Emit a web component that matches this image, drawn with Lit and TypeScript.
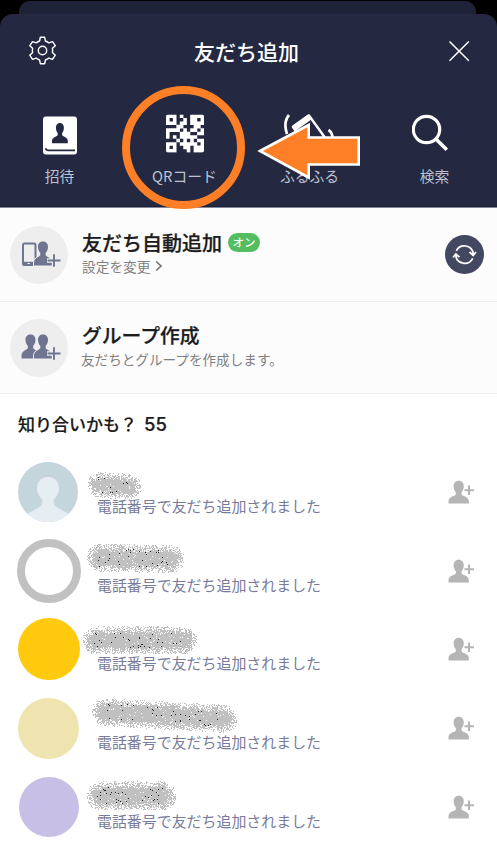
import { LitElement, html, css, svg } from "lit";
import { customElement, property } from "lit/decorators.js";

const QR = [
  "11101001111",
  "10100101101",
  "11101101111",
  "00011000110",
  "11110101101",
  "10001110011",
  "10101111100",
  "00010101011",
  "11101111101",
  "10100110111",
  "11100010111",
];

const qrPath = QR.map((row, y) =>
  [...row].map((c, x) => (c === "1" ? `M${x} ${y}h1.04v1.04h-1.04z` : "")).join("")
).join("");

const person = "M12 0C8.2 0 5.800 2.600 6 6.200C6.200 9 7.400 10.900 8.600 12V14.500C7 16.700 0 16.500 0 21.700V24H24V21.700C24 16.500 17 16.700 15.400 14.500V12C16.600 10.900 17.800 9 18 6.200C18.200 2.600 15.800 0 12 0Z";

interface Spray {
  x: number;
  w: number;
  top: number;
  h: number;
  slope: number;
  seed: number;
}

interface Friend {
  avatar: string;
  spray: Spray;
}

const FRIENDS: Friend[] = [
  { avatar: "default", spray: { x: 87, w: 54, top: 11, h: 26, slope: 3, seed: 11 } },
  { avatar: "ring", spray: { x: 86, w: 98, top: 4, h: 28, slope: 2, seed: 23 } },
  { avatar: "yellow", spray: { x: 82, w: 115, top: 9, h: 28, slope: 0, seed: 37 } },
  { avatar: "beige", spray: { x: 91, w: 146, top: 1, h: 28, slope: 8, seed: 41 } },
  { avatar: "violet", spray: { x: 86, w: 90, top: 6, h: 29, slope: 0, seed: 59 } },
];

function sprayPaths(s: Spray) {
  let n = s.seed * 7919;
  const rnd = () => {
    n = (n + 0x6d2b79f5) | 0;
    let t = Math.imul(n ^ (n >>> 15), 1 | n);
    t = (t + Math.imul(t ^ (t >>> 7), 61 | t)) ^ t;
    return ((t ^ (t >>> 14)) >>> 0) / 4294967296;
  };
  const r = s.h / 2;
  let grey = "";
  let black = "";
  for (let y = 0; y < s.h + s.slope; y++) {
    for (let x = 0; x < s.w; x++) {
      const cx = Math.min(Math.max(x, r), s.w - r);
      const cy = r + (s.slope * x) / s.w;
      const d = Math.hypot(x - cx, y - cy) / r;
      if (d > 1) continue;
      const p = d < 0.45 ? 0.96 : Math.max(0, 1.5 - d * 1.3);
      const cell = `M${x} ${y}h1v1h-1z`;
      if (rnd() < p) grey += cell;
      const inText = x > 10 && x < s.w - 12 && Math.abs(y - cy) < 9;
      if (inText && rnd() < 0.024) black += cell;
    }
  }
  return { grey, black };
}

@customElement("spray-mark")
class SprayMark extends LitElement {
  @property({ attribute: false }) spray!: Spray;
  static styles = css`
    :host { display: block; }
    svg { display: block; shape-rendering: crispEdges; }
  `;
  render() {
    const { grey, black } = sprayPaths(this.spray);
    return html`<svg width=${this.spray.w} height=${this.spray.h + this.spray.slope}>
      <path d=${grey} fill="#c0c0c0"></path>
      <path d=${black} fill="#222"></path>
    </svg>`;
  }
}

@customElement("friend-row")
class FriendRow extends LitElement {
  @property({ attribute: false }) friend!: Friend;
  static styles = css`
    :host { display: block; position: relative; height: 78.7px; }
    .row { display: grid; grid-template-columns: 64px 1fr 27px; column-gap: 16px; padding: 0 22px 0 17px; height: 64px; }
    .avatar { width: 61px; height: 61px; border-radius: 50%; align-self: center; justify-self: center; box-sizing: border-box; overflow: hidden; }
    .avatar svg { display: block; }
    .default { width: 60px; height: 60px; background: #c5d5dc; margin-left: -2px; }
    .ring { width: 64px; height: 64px; border: 8px solid #c1c1c1; background: #fff; }
    .yellow { width: 62px; height: 62px; background: #ffc90e; }
    .beige { background: #efe4b0; margin-left: -2px; }
    .violet { width: 60px; height: 60px; background: #c8bfe7; }
    .note { align-self: end; font-size: 14.95px; line-height: 22px; color: #777c9a; white-space: nowrap; margin-bottom: 7px; }
    .add { align-self: center; }
    .spray { position: absolute; }
  `;
  render() {
    const { avatar, spray } = this.friend;
    return html`<div class="row">
        <div class="avatar ${avatar}">
          ${avatar === "default"
            ? html`<svg width="60" height="60" viewBox="0 0 60 60"><path fill="#e6edf2" d="M30 15C22 15 18.500 21 19 28C19.500 32 21.500 35 24 37.500C25 42 23.500 44 20 46L8 52.500V60H52V52.500L40 46C36.500 44 35 42 36 37.500C38.500 35 40.500 32 41 28C41.500 21 38 15 30 15Z"/></svg>`
            : ""}
        </div>
        <div class="note">電話番号で友だち追加されました</div>
        <svg class="add" width="27" height="24" viewBox="0 0 27 24" fill="#b5b5b5">
          <g transform="translate(.5 .8) scale(.85 .95)"><path d=${person}/></g>
          <path d="M16.200 10.300H26M21 5.500V15" stroke="#fff" stroke-width="3.600"/>
          <path d="M16.500 10.300H26M21 5.500V15" stroke="#b5b5b5" stroke-width="2.100"/>
        </svg>
      </div>
      <spray-mark class="spray" style="left:${spray.x}px;top:${spray.top}px" .spray=${spray}></spray-mark>`;
  }
}

@customElement("app-root")
class AppRoot extends LitElement {
  static styles = css`
    :host { display: block; position: relative; width: 497px; height: 850px; overflow: hidden; background: #fff; font-family: "Noto Sans CJK JP", sans-serif; }
    svg { display: block; }
    .top { background: #000; height: 207px; padding-top: 1px; box-sizing: border-box; border-bottom: 1px solid #1d2138; }
    .back { height: 13px; margin: 0 21px 0 19px; background: #1f2338; border-radius: 11px 11px 0 0; }
    .sheet { height: 192px; background: #242941; border-radius: 13px 13px 0 0; }
    .bar { display: grid; grid-template-columns: 28px 1fr 28px; align-items: center; padding: 0 27px 0 29px; height: 74px; }
    .bar .close { justify-self: end; }
    .gear { margin-top: -1px; }
    .title { color: #fff; font-size: 21px; line-height: 30px; font-weight: 500; text-align: center; margin: -1px 6px 0 0; }
    .tabs { display: grid; grid-template-columns: repeat(4, 125px); margin-left: -3px; padding-top: 24px; }
    .tab { display: flex; flex-direction: column; align-items: center; gap: 11px; color: #bdc1d3; font-size: 14.8px; line-height: 22px; }
    .tab svg { height: 43px; }
    .tab span { margin-top: -1px; }
    .option { display: grid; grid-template-columns: 58px 1fr 39px; column-gap: 14px; align-items: center; padding: 0 13px 0 10px; height: 92px; background: #fcfcfc; border-bottom: 1px solid #ededed; box-sizing: border-box; }
    .option .words { padding-bottom: 4px; }
    .first { border-top: 1px solid #85889a; height: 95px; }
    .first .words { padding-bottom: 3px; }
    .disc { width: 58px; height: 58px; border-radius: 50%; background: #eee; }
    .heading { display: flex; align-items: center; gap: 6px; font-size: 20px; line-height: 25px; font-weight: 500; color: #1c1c1c; -webkit-text-stroke: .25px #1c1c1c; }
    .pill { font-size: 11.5px; line-height: 19px; height: 19px; width: 32px; text-align: center; border-radius: 10px; background: #53bd60; color: #fff; -webkit-text-stroke: 0; }
    .detail { display: flex; align-items: center; gap: 5px; font-size: 13.7px; line-height: 22px; color: #808080; white-space: nowrap; }
    .second .words { padding-bottom: 5px; }
    .second .heading { line-height: 27px; font-size: 19.8px; }
    .second .detail { font-size: 13.6px; margin-left: -1px; }
    .sync { width: 39px; height: 39px; border-radius: 50%; background: #434861; }
    .maybe { display: flex; gap: 7px; align-items: center; height: 59px; padding-left: 18px; font-size: 17px; font-weight: 500; color: #1b1b1b; -webkit-text-stroke: .2px #1b1b1b; }
    .count { font-family: Inter, sans-serif; font-size: 18.5px; font-weight: 500; }
    .list { padding-top: 7px; }
    .marks { position: absolute; left: 0; top: 0; }
  `;
  render() {
    return html`
      <header class="top">
        <div class="back"></div>
        <div class="sheet">
          <div class="bar">
            <svg class="gear" width="28" height="30" viewBox="0 0 28 30" fill="none" stroke="#fff" stroke-width="1.400" stroke-linejoin="round">
              <path d="M11.300 1.300H15.700L16.400 5C17.700 5.400 18.800 6 19.800 6.900L23.500 5.600L26.300 9.700L23.400 12.300C23.700 13.700 23.700 15.100 23.400 16.500L26.300 19.200L23.500 23.400L19.800 22.100C18.800 23 17.700 23.600 16.400 24L15.700 27.700H11.300L10.600 24C9.300 23.600 8.200 23 7.200 22.100L3.500 23.400L.8 19.200L3.600 16.500C3.300 15.100 3.300 13.700 3.600 12.300L.8 9.700L3.500 5.600L7.200 6.900C8.200 6 9.300 5.400 10.600 5Z"/>
              <circle cx="13.500" cy="14.500" r="4.200"/>
            </svg>
            <div class="title">友だち追加</div>
            <svg class="close" width="22" height="22" viewBox="0 0 22 22" stroke="#fff" stroke-width="1.500"><path d="M1.500 1.500L20.800 20.800M20.800 1.500L1.500 20.800"/></svg>
          </div>
          <div class="tabs">
            <div class="tab">
              <svg width="36" height="43" viewBox="0 0 36 43">
                <rect x="1" y="4.500" width="34" height="38" rx="3" fill="#fff"/>
                <g transform="translate(10 11) scale(.66 .84)" fill="#242941"><path d=${person}/></g>
                <path d="M3.500 36.300Q4 38.300 6 38.300H33" fill="none" stroke="#242941" stroke-width="1.700"/>
              </svg>
              <span>招待</span>
            </div>
            <div class="tab">
              <svg width="38" height="43" viewBox="0 0 38 43">
                <clipPath id="round"><rect y="2.500" width="38" height="38" rx="2"/></clipPath>
                <g clip-path="url(#round)"><path transform="translate(0 2.500) scale(3.4545)" fill="#fff" d=${qrPath}/></g>
              </svg>
              <span>QRコード</span>
            </div>
            <div class="tab">
              <svg width="56" height="43" viewBox="0 0 56 43" fill="none" stroke="#fff" stroke-width="2.700">
                <path d="M7 3Q1 10 5 22"/>
                <path d="M11 15L27 3.500L49 34L33 46Z" stroke-width="2.400" stroke-linejoin="round"/>
                <path d="M11.500 16.500L28 4.800" stroke-width="6"/>
                <path d="M46.500 18Q50.500 20.500 50.500 26"/>
              </svg>
              <span>ふるふる</span>
            </div>
            <div class="tab">
              <svg width="46" height="43" viewBox="0 0 46 43" fill="none" stroke="#fff" stroke-width="3.200">
                <circle cx="14.500" cy="17.500" r="13.200"/><path d="M23.900 26.900L34.800 37.800" stroke-width="3.600"/>
              </svg>
              <span>検索</span>
            </div>
          </div>
        </div>
      </header>

      <section class="option first">
        <div class="disc">
          <svg width="58" height="58" viewBox="0 0 58 58">
            <rect x="13" y="17.500" width="12.500" height="21.500" rx="1.500" fill="none" stroke="#6f7590" stroke-width="2"/>
            <path d="M13 35.800H25V39.500H13Z" fill="#6f7590"/><path d="M17.500 37.500H20" stroke="#eee"/>
            ${this.bust(0)}${this.plus()}
          </svg>
        </div>
        <div class="words">
          <div class="heading">友だち自動追加<span class="pill">オン</span></div>
          <div class="detail">設定を変更<svg width="8" height="12" viewBox="0 0 8 12" fill="none" stroke="#707070" stroke-width="1.600"><path d="M1.200 1.500L6 6L1.200 10.500"/></svg></div>
        </div>
        <div class="sync">
          <svg width="39" height="39" viewBox="0 0 39 39" fill="none" stroke="#fff" stroke-width="1.700">
            <path d="M11.300 15.800A9 9 0 0 1 28.300 19M27.700 23.400A9 9 0 0 1 10.700 20.200M24.500 17L28.200 20.400L31 17M8 22.500L10.800 19L14.500 22.200"/>
          </svg>
        </div>
      </section>

      <section class="option second">
        <div class="disc">
          <svg width="58" height="58" viewBox="0 0 58 58">
            ${this.bust(-12.5)}${this.bust(0)}${this.plus()}
          </svg>
        </div>
        <div class="words">
          <div class="heading">グループ作成</div>
          <div class="detail">友だちとグループを作成します。</div>
        </div>
      </section>

      <div class="maybe">知り合いかも？<span class="count">55</span></div>
      <div class="list">${FRIENDS.map((f) => html`<friend-row .friend=${f}></friend-row>`)}</div>

      <svg class="marks" width="370" height="215" viewBox="0 0 370 215">
        <circle cx="183.500" cy="147.500" r="57.500" fill="none" stroke="#ff7f27" stroke-width="8"/>
        <path d="M260 151L308.700 125V137.500H358.700V164.500H308.700V177.500Z" fill="#ff7f27" stroke="#fff" stroke-width="2.600"/>
      </svg>
    `;
  }
  bust(dx: number) {
    return svg`<path transform="translate(${dx} 0)" fill="#6f7590" stroke="#eee" stroke-width="2" paint-order="stroke" d="M33 15.500C30 15.500 28 17.500 28 20.700C28 23.500 29 25.500 30.300 26.800V29.300C28.500 31.500 24 32 24 37V39.600H42V37C42 32 37.500 31.500 35.700 29.300V26.800C37 25.500 38 23.500 38 20.700C38 17.500 36 15.500 33 15.500Z"/>`;
  }
  plus() {
    return svg`<path d="M37 34.500H51M44 28V41.500" stroke="#eee" stroke-width="4.500"/><path d="M37.500 34.500H50.500M44 28.200V40.800" stroke="#6f7590" stroke-width="1.900"/>`;
  }
}
